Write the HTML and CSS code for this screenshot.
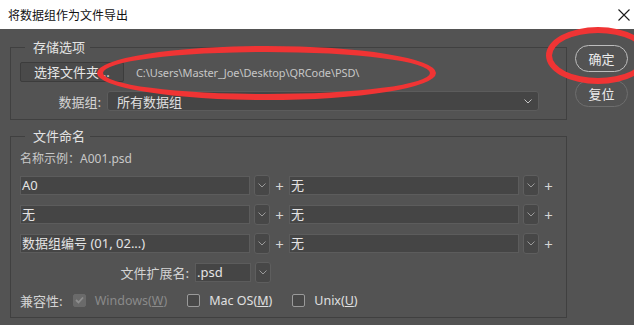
FILE: index.html
```html
<!DOCTYPE html>
<html lang="zh-CN">
<head>
  <meta charset="UTF-8" />
  <title>将数据组作为文件导出</title>
  <link rel="stylesheet" href="styles.css">
</head>
<body>

  <!-- Title bar -->
  <div class="titlebar">
    <span class="title">将数据组作为文件导出</span>
    <svg class="close" width="12" height="12" viewBox="0 0 12 12">
      <path d="M0.5 0.5 L11.5 11.5 M11.5 0.5 L0.5 11.5" stroke="#1a1a1a" stroke-width="1.1" fill="none"/>
    </svg>
  </div>

  <div class="dialog">
    <div class="main">

      <!-- Storage options -->
      <fieldset class="group group-store">
        <legend>存储选项</legend>
        <div class="row">
          <button class="btn-folder">选择文件夹...</button>
          <span class="path">C:\Users\Master_Joe\Desktop\QRCode\PSD\</span>
        </div>
        <div class="row row-set">
          <span class="label label-set">数据组:</span>
          <div class="select select-wide">
            <span>所有数据组</span>
            <svg width="8" height="5" viewBox="0 0 8 5"><path d="M0.5 0.5 L4 4 L7.5 0.5" stroke="#c4c4c4" fill="none"/></svg>
          </div>
        </div>
      </fieldset>

      <!-- File naming -->
      <fieldset class="group group-name">
        <legend>文件命名</legend>
        <div class="sample">名称示例：<span class="sample-val">A001.psd</span></div>

        <div class="row name-row">
          <div class="field">A0</div>
          <div class="drop"><svg width="8" height="5" viewBox="0 0 8 5"><path d="M0.5 0.5 L4 4 L7.5 0.5" stroke="#9a9a9a" fill="none"/></svg></div>
          <span class="plus">+</span>
          <div class="field">无</div>
          <div class="drop"><svg width="8" height="5" viewBox="0 0 8 5"><path d="M0.5 0.5 L4 4 L7.5 0.5" stroke="#9a9a9a" fill="none"/></svg></div>
          <span class="plus">+</span>
        </div>

        <div class="row name-row">
          <div class="field">无</div>
          <div class="drop"><svg width="8" height="5" viewBox="0 0 8 5"><path d="M0.5 0.5 L4 4 L7.5 0.5" stroke="#9a9a9a" fill="none"/></svg></div>
          <span class="plus">+</span>
          <div class="field">无</div>
          <div class="drop"><svg width="8" height="5" viewBox="0 0 8 5"><path d="M0.5 0.5 L4 4 L7.5 0.5" stroke="#9a9a9a" fill="none"/></svg></div>
          <span class="plus">+</span>
        </div>

        <div class="row name-row">
          <div class="field">数据组编号 (01, 02...)</div>
          <div class="drop"><svg width="8" height="5" viewBox="0 0 8 5"><path d="M0.5 0.5 L4 4 L7.5 0.5" stroke="#9a9a9a" fill="none"/></svg></div>
          <span class="plus">+</span>
          <div class="field">无</div>
          <div class="drop"><svg width="8" height="5" viewBox="0 0 8 5"><path d="M0.5 0.5 L4 4 L7.5 0.5" stroke="#9a9a9a" fill="none"/></svg></div>
          <span class="plus">+</span>
        </div>

        <div class="row name-row">
          <span class="label label-ext">文件扩展名:</span>
          <div class="field field-ext">.psd</div>
          <div class="drop"><svg width="8" height="5" viewBox="0 0 8 5"><path d="M0.5 0.5 L4 4 L7.5 0.5" stroke="#9a9a9a" fill="none"/></svg></div>
        </div>

        <div class="row compat-row">
          <span class="label">兼容性:</span>
          <span class="check check-disabled">
            <span class="box box-checked">
              <svg width="9" height="8" viewBox="0 0 9 8"><path d="M1 4 L3.5 6.5 L8 1.5" stroke="#8e8e8e" stroke-width="1.8" fill="none"/></svg>
            </span>
            <span>Windows(<u>W</u>)</span>
          </span>
          <span class="check"><span class="box"></span><span>Mac OS(<u>M</u>)</span></span>
          <span class="check"><span class="box"></span><span>Unix(<u>U</u>)</span></span>
        </div>
      </fieldset>
    </div>

    <!-- Side buttons -->
    <div class="side">
      <button class="pill pill-default">确定</button>
      <button class="pill">复位</button>
    </div>
  </div>

  <!-- Hand-drawn red marks -->
  <div class="mark mark-path"></div>
  <div class="mark mark-ok"></div>

</body>
</html>
```

FILE: styles.css
```css
* {
  box-sizing: border-box;
}
html, body {
  margin: 0;
  padding: 0;
}
body {
  position: relative;
  width: 634px;
  height: 325px;
  overflow: hidden;
  background-color: #535353;
  font-family: "Noto Sans", "Noto Sans CJK SC", sans-serif;
  font-size: 12px;
  color: #d8d8d8;
}

.titlebar {
  height: 29px;
  background: #ffffff;
  display: flex;
  align-items: center;
  justify-content: space-between;
  padding: 0 4px 0 8px;
  color: #111;
}
.title {
  font-family: "Noto Sans CJK SC", sans-serif;
  font-size: 12px;
}

.dialog {
  display: flex;
  height: 296px;
}
.main {
  margin-left: 10px;
  width: 557px;
  padding-top: 10px;
  display: flex;
  flex-direction: column;
}

.group {
  margin: 0;
  min-width: 0;
  border: 1px solid #404040;
  padding: 7px 8px 8px 9px;
}
.group legend {
  margin-left: 5px;
  padding: 0 5px 0 8px;
  font-family: "Noto Sans CJK SC", sans-serif;
  font-size: 13px;
  line-height: 16px;
  color: #e4e4e4;
}
.group-name {
  margin-top: 8px;
  padding-top: 0;
}

.row {
  display: flex;
  align-items: center;
}

.btn-folder {
  width: 104px;
  height: 20px;
  padding: 0;
  background: #4a4a4a;
  border: 1px solid #3c3c3c;
  border-radius: 2px;
  color: #e6e6e6;
  font-family: "Noto Sans CJK SC", sans-serif;
  font-size: 13px;
  line-height: 18px;
}
.path {
  margin-left: 12px;
  color: #c6c6c6;
  font-family: "Noto Sans", sans-serif;
  font-size: 11px;
  letter-spacing: -0.1px;
}

.row-set {
  margin-top: 9px;
}
.label {
  font-family: "Noto Sans CJK SC", sans-serif;
  font-size: 13px;
  color: #d4d4d4;
}
.label-set {
  width: 81px;
  text-align: right;
  margin-right: 6px;
}
.select {
  height: 20px;
  background: #454545;
  border: 1px solid #5c5c5c;
  border-radius: 3px;
  display: flex;
  align-items: center;
  justify-content: space-between;
  padding: 0 6px 0 9px;
  color: #e0e0e0;
  font-family: "Noto Sans CJK SC", sans-serif;
  font-size: 13px;
}
.select-wide {
  width: 432px;
}

.sample {
  margin: 6px 0 8px;
  line-height: 16px;
  font-family: "Noto Sans CJK SC", sans-serif;
  color: #c8c8c8;
}
.sample-val {
  font-family: "Noto Sans", sans-serif;
}

.name-row {
  height: 21px;
  margin-bottom: 8px;
}
.field {
  width: 231px;
  height: 19px;
  background: #454545;
  border: 1px solid #5c5c5c;
  padding-left: 1px;
  line-height: 17px;
  color: #e4e4e4;
  font-family: "Noto Sans", "Noto Sans CJK SC", sans-serif;
  font-size: 13px;
  white-space: nowrap;
  overflow: hidden;
}
.drop {
  width: 16px;
  height: 21px;
  margin-left: 4px;
  background: #474747;
  border: 1px solid #5e5e5e;
  border-radius: 3px;
  display: flex;
  align-items: center;
  justify-content: center;
}
.plus {
  width: 19px;
  text-align: center;
  font-size: 15px;
  color: #d6d6d6;
}

.label-ext {
  width: 169px;
  text-align: right;
  margin-right: 6px;
}
.field-ext {
  width: 56px;
}

.compat-row {
  height: 18px;
  margin-top: 1px;
}
.check {
  display: inline-flex;
  align-items: center;
  gap: 9px;
  margin-left: 20px;
  color: #e0e0e0;
  font-size: 12.5px;
}
.compat-row .label + .check {
  margin-left: 10px;
}
.check-disabled {
  color: #8a8a8a;
}
.box {
  width: 13px;
  height: 13px;
  border: 1px solid #9a9a9a;
  border-radius: 2px;
  background: #484848;
  display: flex;
  align-items: center;
  justify-content: center;
}
.box-checked {
  background: #6a6a6a;
  border-color: #6a6a6a;
}

.side {
  margin-left: 8px;
  width: 53px;
  padding-top: 16px;
  display: flex;
  flex-direction: column;
  gap: 8px;
}
.pill {
  height: 27px;
  padding: 0;
  background: transparent;
  border: 1px solid #6e6e6e;
  border-radius: 14px;
  color: #ececec;
  font-family: "Noto Sans CJK SC", sans-serif;
  font-size: 13px;
}
.pill-default {
  border-color: #bdbdbd;
}

.mark {
  position: absolute;
  border: 6px solid #f03434;
  border-radius: 50%;
}
.mark-path {
  left: 97px;
  top: 46px;
  width: 339px;
  height: 54px;
}
.mark-ok {
  left: 546px;
  top: 27px;
  width: 104px;
  height: 57px;
}
```
